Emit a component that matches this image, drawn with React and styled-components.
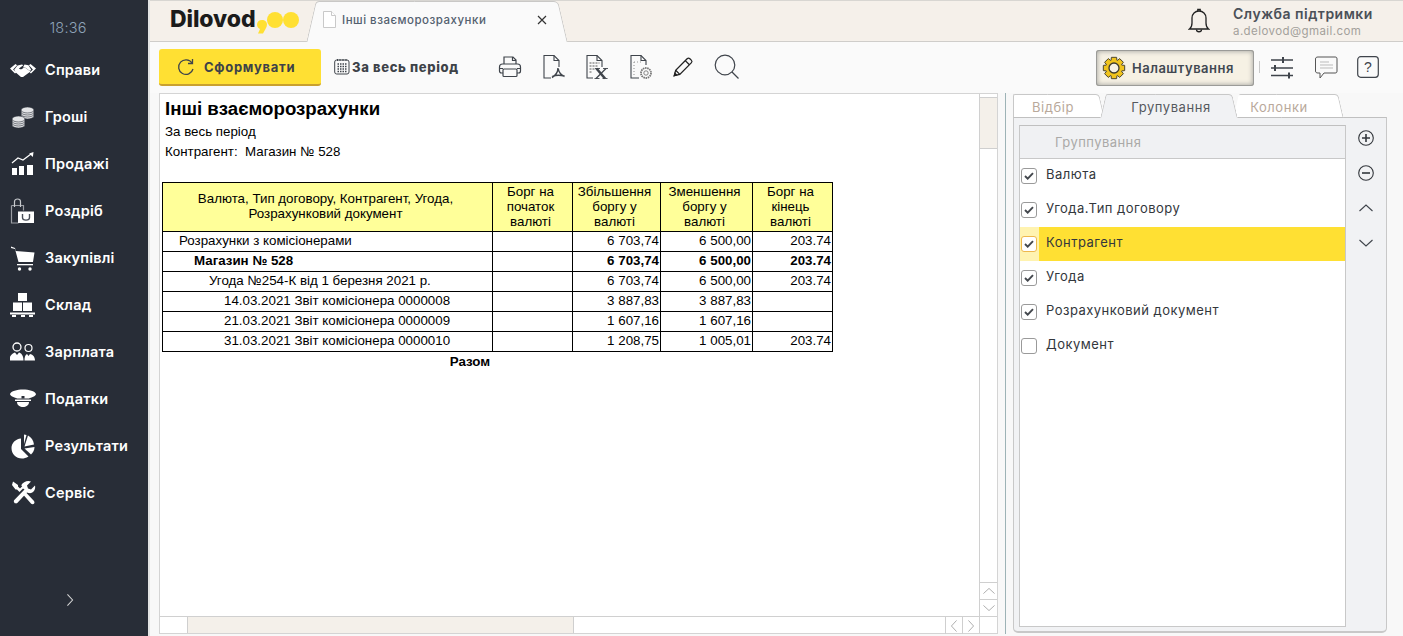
import React from "react";
import styled, { createGlobalStyle } from "styled-components";

const Global = createGlobalStyle`
  html, body, #root { margin: 0; padding: 0; width: 100%; height: 100%; overflow: hidden; }
  body { font-family: Inter, "Noto Sans", sans-serif; background: #f8f8f8; }
  * { box-sizing: border-box; }
`;

const Shell = styled.div`display: flex; width: 1403px; height: 636px;`;
const Sidebar = styled.nav`
  width: 150px; flex: none; background: #282d37; border-right: 2px solid #e4e4e4;
  display: flex; flex-direction: column; color: #fff;
`;
const Clock = styled.div`
  height: 46px; padding: 19px 12px 0 0; text-align: center; font-size: 14.5px; line-height: 18px; font-weight: 300; letter-spacing: 0.2px; color: #8fa3b8;
`;
const NavList = styled.div`display: flex; flex-direction: column; flex: 1;`;
const NavItem = styled.div`
  height: 47px; display: flex; align-items: center; flex: none; gap: 9px; padding-left: 10px;
  font-size: 14.5px; font-weight: 600; letter-spacing: 0.2px; color: #fff;
  svg { width: 26px; height: 26px; flex: none; }
`;
const Expand = styled.div`height: 72px; display: flex; justify-content: center; padding-right: 8px; align-items: flex-start; svg { margin-top: 30px; }`;

const Main = styled.div`flex: 1; min-width: 0; display: flex; flex-direction: column;`;
const TopBar = styled.header`
  height: 42px; flex: none; background: #f5f0ea; border-bottom: 1px solid #cfcdca; border-top: 1px solid #d8d6d2; display: flex; align-items: flex-end; position: relative;
`;
const Logo = styled.div`
  width: 157px; padding-left: 20px; height: 40px; display: flex; align-items: center; font-size: 23px; font-weight: 800; color: #1b1b1b; letter-spacing: -0.1px; padding-bottom: 4px;
  svg { flex: none; margin: 15px 0 0 2px; display: block; }
`;
const Dot = styled.i`width: 16px; height: 16px; border-radius: 50%; background: #ffe033; display: block; margin-top: 2px; flex: none;`;
const DocTab = styled.div`
  width: 260px; height: 41px; margin-bottom: -1px; position: relative; display: flex; align-items: center; padding: 0 20px 4px 16px; gap: 6px;
  font-size: 11.5px; font-weight: 500; color: #53606f; letter-spacing: 0.5px;
  &::before, &::after {
    content: ""; position: absolute; top: 0; bottom: 0; width: 55%; background: #fafafa; border-top: 1px solid #c9c8c6; z-index: 0;
  }
  &::before { left: 4px; transform: skewX(-13deg); border-left: 1px solid #c9c8c6; border-top-left-radius: 4px; }
  &::after { right: 4px; transform: skewX(13deg); border-right: 1px solid #c9c8c6; border-top-right-radius: 5px; }
  & > * { position: relative; z-index: 1; }
`;
const TabTitle = styled.span`flex: 1;`;
const TopRight = styled.div`margin-left: auto; height: 40px; display: flex; align-items: center; padding-right: 30px; gap: 23px;`;
const User = styled.div`display: flex; flex-direction: column; gap: 2px; width: 140px;`;
const UserName = styled.div`font-size: 14px; line-height: 17px; font-weight: 600; letter-spacing: 0.5px; color: #4b5058; white-space: nowrap;`;
const UserMail = styled.div`font-size: 11.5px; line-height: 14px; letter-spacing: 0.42px; color: #a3a09b; white-space: nowrap;`;

const Toolbar = styled.div`
  height: 51px; flex: none; background: #fafafa; display: flex; align-items: center; padding: 0 0 2px 9px;
`;
const Primary = styled.button`
  width: 162px; height: 37px; border: 0; border-bottom: 2px solid #c9a02f; border-radius: 3px; background: #ffe033; font: inherit; font-size: 13px; font-weight: 700; letter-spacing: 0.7px; color: #3d4248; display: flex; align-items: center; padding: 0 0 0 18px; gap: 10px; margin-top: 2px;
`;
const Period = styled.div`
  display: flex; align-items: center; gap: 2px; margin-left: 13px; font-size: 13px; font-weight: 800; letter-spacing: 0.65px; color: #3d4248; width: 134px; margin-right: 30px; white-space: nowrap;
`;
const Tools = styled.div`display: flex; align-items: center; gap: 19.5px; svg { flex: none; display: block; }`;
const Right = styled.div`margin-left: auto; display: flex; align-items: center; padding-right: 24px;`;
const Settings = styled.button`
  width: 158px; height: 36px; border: 0; border-radius: 3px; background: #f6f1e4; box-shadow: inset 0 0 0 1px #9b9b98, inset 0 0 4px 2px #b4b3ae; font: inherit; font-size: 13px; font-weight: 600; color: #414851; display: flex; align-items: center; padding: 0 0 0 6px; gap: 6px; margin: 3px 5px 0 0; letter-spacing: 0.5px;
`;
const Sep = styled.i`width: 1px; height: 12px; background: #c8c8c8; margin-right: 10px;`;
const RightIcons = styled.div`display: flex; align-items: center; gap: 19.5px; svg { display: block; flex: none; }`;

const Body = styled.div`flex: 1; min-height: 0; display: flex; padding: 0 16px 2px 9px;`;
const Report = styled.section`
  width: 839px; flex: none; border: 1px solid #d4d4d4; background: #fff; display: grid; grid-template-columns: 1fr 18px; grid-template-rows: 1fr 17px; margin-right: 7px; min-height: 0;
`;
const Sheet = styled.div`padding: 4px 0 0 2px; color: #000; font-family: "Liberation Sans", Arial, sans-serif; font-size: 13.33px; min-width: 0; min-height: 0; overflow: hidden;`;
const Title = styled.h1`margin: 0 0 0 3px; font-size: 18.67px; line-height: 21px; font-weight: 700;`;
const Line = styled.div`margin-left: 3px; height: 20px; line-height: 20px; white-space: pre; &:first-of-type { margin-top: 3px; }`;
const Table = styled.table`border-collapse: collapse; margin-top: 20px; table-layout: fixed; width: 671px; font-size: 13.33px; line-height: 15px;`;
const Th = styled.th`border: 1px solid #000; background: #ffff99; font-weight: 400; height: 49px; padding: ${p => p.$top ? "1px 4px 0 0" : "0 4px 2px 0"}; text-align: center; vertical-align: ${p => p.$top ? "top" : "middle"};`;
const Td = styled.td`
  border: 1px solid #000; height: 20px; padding: 0 1px 2px ${p => p.$indent || 1}px; white-space: nowrap; text-align: ${p => p.$num ? "right" : "left"}; font-weight: ${p => p.$b ? 700 : 400};
`;
const TotalCell = styled.td`height: 20px; text-align: center; font-weight: 700; padding-right: 56px;`;

const VScroll = styled.div`border-left: 1px solid #d0d0d0; display: flex; flex-direction: column; background: #fff;`;
const VTop = styled.div`height: 4px; border-bottom: 1px solid #cfcfcf;`;
const VThumb = styled.div`height: 51px; background: #f4f0ea; border-bottom: 1px solid #cfcfcf;`;
const Fill = styled.div`flex: 1;`;
const SBtn = styled.div`
  height: 17px; width: ${p => p.$w || "auto"}; border-top: ${p => p.$h ? 0 : "1px solid #cfcfcf"}; border-left: ${p => p.$h ? "1px solid #cfcfcf" : 0}; display: flex; align-items: center; justify-content: center; flex: none;
`;
const HScroll = styled.div`border-top: 1px solid #d0d0d0; display: flex; background: #fff; height: 17px;`;
const HStart = styled.div`width: 28px; flex: none; border-right: 1px solid #cfcfcf;`;
const HThumb = styled.div`width: 386px; flex: none; background: #f4f0ea; border-right: 1px solid #cfcfcf;`;
const Corner = styled.div`border-top: 1px solid #d0d0d0; border-left: 1px solid #d0d0d0;`;

const Splitter = styled.div`width: 1px; flex: none; background: #9db3b6; margin-right: 7px;`;

const Panel = styled.aside`flex: 1; min-width: 0; display: flex; flex-direction: column; padding: 1px 0 1px 0;`;
const Tabs = styled.div`display: flex; height: 24px; flex: none; position: relative; z-index: 1; margin-bottom: -1px;`;
const SideTab = styled.div`
  position: relative; height: 24px; width: ${p => p.$w}px; margin-left: ${p => p.$ml || 0}px; display: flex; align-items: center; justify-content: center; font-size: 13px; padding: 1px ${p => p.$pr || 0}px 0 ${p => p.$pl || 0}px; color: ${p => p.$active ? "#55595e" : "#b9a99b"}; letter-spacing: 0.55px; z-index: ${p => p.$active ? 2 : 1};
  & > span { position: relative; z-index: 1; }
  &::before, &::after {
    content: ""; position: absolute; top: 0; bottom: 0; width: 55%; border-top: 1px solid #c8c8c8; background: ${p => p.$active ? "#f1f2f4" : "#fff"};
    border-bottom: ${p => p.$active ? "1px solid #f1f2f4" : "1px solid #c0c0c0"};
  }
  &::before { left: ${p => p.$flat ? 0 : "3px"}; transform: ${p => p.$flat ? "none" : "skewX(-13deg)"}; border-left: 1px solid ${p => p.$noLeft ? "transparent" : "#c8c8c8"}; border-top-left-radius: 2px; }
  &::after { right: 3px; transform: skewX(13deg); border-right: 1px solid #c8c8c8; border-top-right-radius: 4px; }
`;
const PanelBody = styled.div`
  flex: 1; min-height: 0; border: 1px solid #c8c8c8; border-top: 1px solid #c0c0c0; border-radius: 0 0 5px 5px; background: #f1f2f4; display: flex; padding: 7px 0 4px 5px; border-bottom-width: 2px;
`;
const GroupList = styled.div`width: 327px; flex: none; border: 1px solid #c8c8c8; border-top-color: #c0c0c0; background: #fff; display: flex; flex-direction: column;`;
const GroupHead = styled.div`height: 33px; flex: none; background: #f0f1f3; border-bottom: 1px solid #c8c8c8; display: flex; align-items: center; padding: 0 0 0 35px; font-size: 13px; color: #aaa9a7; letter-spacing: 0.45px;`;
const Row = styled.div`
  height: 34px; flex: none; display: flex; align-items: center; padding-bottom: 4px; font-size: 13px; letter-spacing: 0.48px; color: #33373c;
  background: ${p => p.$selected ? "linear-gradient(90deg, #fff3b0 0 19px, #ffe033 19px)" : "transparent"};
`;
const Check = styled.span`
  width: 16px; height: 16px; margin: 3px 9px 0 1px; flex: none; border: 1px solid ${p => p.$selected ? "#eeb84c" : "#9a9a9a"}; border-radius: 3px; background: #fff; display: flex; align-items: center; justify-content: center;
`;
const Actions = styled.div`flex: 1; display: flex; flex-direction: column; align-items: center; margin-top: -5px; svg { display: block; }`;
const ActionBtn = styled.div`height: 35px; display: flex; align-items: center; justify-content: center; flex: none; width: 100%;`;

const ic = "#fff";
const HandshakeIcon = () => (
  <svg viewBox="0 0 26 26" fill={ic}>
    <path d="M0 11.5 5.5 7l1.6 1.2-4 4.3 3.2 3-1.3 1z"/>
    <path d="M26 11.5 20.5 7l-1.6 1.2 4 4.3-3.2 3 1.3 1z"/>
    <path d="M7.5 8.5 12 7.5l1.3.8-4.4 3.3c1 1.1 2.4.8 3.4.1l2.2-1.5 6 4.3-7.5 5.4h-2L5.5 15.2l-1.3-2.5z"/>
    <path d="M14.5 7.5 18.5 8.3l2.7 4.5-1.2 1.3-5.7-4.2-1.5.9z"/>
  </svg>
);
const CoinsIcon = () => (
  <svg viewBox="0 0 26 26" fill="#e4e5e7" stroke="#282d37" strokeWidth=".6">
    {[9, 7, 5, 3].map(y => <ellipse key={y} cx="17.5" cy={y + 3} rx="6.5" ry="3"/>)}
    {[18, 16, 14, 12].map(y => <ellipse key={y} cx="8.5" cy={y + 3} rx="6.5" ry="3"/>)}
  </svg>
);
const ChartIcon = () => (
  <svg viewBox="0 0 26 26" fill={ic}>
    <rect x="2" y="17" width="5" height="7"/><rect x="9" y="15" width="5" height="9"/><rect x="17" y="14" width="6" height="10"/>
    <path d="M2 12 8 7l5 2 8-6" fill="none" stroke={ic} strokeWidth="1.2"/><path d="M23.5 1l-.6 5-3.700-3.500z"/>
  </svg>
);
const BagIcon = () => (
  <svg viewBox="0 0 26 26" fill="none">
    <path d="M1.500 7.500h12v5M1.500 7.500V25h7" stroke="#9a9da3" strokeWidth="1.2"/>
    <path d="M4.500 9V3.500C4.500 2 6 1 7.500 1s3 1 3 2.500V9" stroke="#c7c9cd" strokeWidth="1.2"/>
    <path d="M8 13.500h16v11.500H8z" fill="#fff"/>
    <path d="M12.500 16v3.500c0 3.500 7 3.500 7 0V16" stroke="#4a4f59" strokeWidth="1.400"/>
  </svg>
);
const CartIcon = () => (
  <svg viewBox="0 0 26 26" fill={ic}>
    <path d="M1 1.500 5 3l.8 3 18.700 1.500L23 17H8.500L5 4 1 3z"/><path d="M7 19h16v1.300H7z"/><circle cx="9.500" cy="24" r="1.700"/><circle cx="20" cy="24" r="1.700"/>
  </svg>
);
const BoxesIcon = () => (
  <svg viewBox="0 0 26 26" fill={ic}>
    <rect x="8" y="1" width="9" height="8"/><rect x="3" y="10.500" width="9" height="8.500"/><rect x="13" y="10.500" width="9" height="8.500"/>
    <path d="M0 20.500h25v2H0zM2 23h4v2H2zM11 23h4v2h-4zM19 23h4v2h-4z"/>
  </svg>
);
const PeopleIcon = () => (
  <svg viewBox="0 0 26 26" fill="none">
    <circle cx="7" cy="8" r="4" stroke={ic} strokeWidth="1.300"/><circle cx="18.500" cy="9" r="3.500" stroke={ic} strokeWidth="1.200"/>
    <path d="M0 21.500v-3c0-2 3-4.500 5-5l2 2.500 2-2.500c2 .5 4.500 2.500 4.500 8z" fill={ic}/>
    <path d="M14.500 21.500c0-3 .5-5.500 2.500-6.500l1.500 2 1.500-2c2 .5 5 2 5 6.500z" fill={ic}/>
  </svg>
);
const CapIcon = () => (
  <svg viewBox="0 0 26 26" fill={ic}>
    <path d="M0 8C1 5 7 3.500 13 3.500S25 5 26 8c0 2.500-5 3.500-7 4.500H7C5 11.500 0 10.500 0 8z"/>
    <path d="M5 13.500h16v1.500H5z"/><path d="M7 16h12c0 3.500-3 5-6 5s-6-1.500-6-5z"/>
    <rect x="11.500" y="10" width="3" height="2.500" fill="#282d37"/>
  </svg>
);
const PieIcon = () => (
  <svg viewBox="0 0 26 26" fill={ic}>
    <path d="M11 5.500v10.500l7.500 7.500C16 25 14 25.500 12 25.500 6 25.500 1.500 21 1.500 15 1.500 10 5.500 6 11 5.500z"/>
    <path d="M14 1.500 16.500 2 14 11z"/><path d="M18 2.500C21 4 23.500 7 24 11.500l-9.500 2z"/>
    <path d="M14.500 15.500 24.500 14c0 3-1.500 6-3.500 7.500z"/>
  </svg>
);
const ToolsIcon = () => (
  <svg viewBox="0 0 26 26" fill={ic}>
    <path d="M3 1.500 8 5v1.500l2 2 2.200-2.200-1-1C13 1.500 18 0 21 1.500l-4 4 1 3 3 1 4-4c1 4-2 8.500-6.500 7.500l-1.500-.500-9.700 10.500c-2 1.500-4.500-1-3-3L14.500 9.500l-1.500-1-1.800 1.800L9.500 12 7 9.500H5.500L2 5z"/>
    <path d="M13.500 15 16 12.500l8 8.500c1.500 2.200-.8 4-2.800 2.800z"/>
  </svg>
);
const LogoComma = () => (
  <svg width="10" height="14" viewBox="0 0 10 14" fill="#ffe033"><path d="M5 0c3 0 5 2 5 4.500 0 1.500-.5 3-1.500 4.500L6 13.500H1L3 9C1.200 8.300 0 6.500 0 4.500 0 2 2 0 5 0z"/></svg>
);

const d = "#3f444b";
const Refresh = () => (
  <svg width="17" height="18" viewBox="0 0 17 18" fill="none" stroke={d} strokeWidth="1.300"><path d="M15 5A7.300 7.300 0 1 0 16 11"/><path d="M15.500 1v4.500H11" /></svg>
);
const Calendar = () => (
  <svg width="16" height="17" viewBox="0 0 16 17" fill="none" stroke={d}><rect x=".7" y="2" width="14.300" height="14" rx="2"/><path d="M3.500 1v2M6 1v2M9 1v2M12 1v2" /><path d="M3.500 6h9M3.500 8.500h9M3.500 11h9M3.500 13.500h9" strokeWidth="1.400" strokeDasharray="1.500 1"/></svg>
);
const Printer = () => (
  <svg width="24" height="24" viewBox="0 0 24 24" fill="none" stroke={d} strokeWidth="1.200"><path d="M6 9V2h9l3 3v4"/><path d="M14.500 2v3.500H18"/><path d="M5 18H3.500C2 18 1.500 17 1.500 16v-4c0-2 1-3 3-3h15c2 0 3 1 3 3v4c0 1-.5 2-2 2H19"/><rect x="5" y="14" width="14" height="7.500" rx="1"/><path d="M1.500 13.500H5M19 13.500h3.500"/></svg>
);
const Pdf = () => (
  <svg width="24" height="26" viewBox="0 0 24 26" fill="none" stroke={d} strokeWidth="1.100">
    <path d="M9 24H2V1.500h10l5 5V13"/><path d="M12 1.500v5h5"/>
    <path d="M16 14c0 3-2 7-6 9.500M16 14c.5 3 3 7 6.500 8.500M10.500 22.500c3-1.500 8-1.500 12-.5" strokeWidth="1.500"/>
  </svg>
);
const Xls = () => (
  <svg width="24" height="26" viewBox="0 0 24 26" fill="none" stroke={d} strokeWidth="1.100">
    <path d="M8 24H2V1.500h10l5 5V13"/><path d="M12 1.500v5h5"/><path d="M4.500 9h10M4.500 12h9M4.500 15h5M4.500 18h3" stroke="#aaa" strokeWidth="1.800" strokeDasharray="2 1"/>
    <path d="M11.500 14.500 20 24.500" strokeWidth="2.600"/><path d="M21 14.500 11 24.500" strokeWidth="1.200"/><path d="M10 14.500h5M18 14.500h5M9.500 24.500h5M17.500 24.500h5" strokeWidth=".9"/>
  </svg>
);
const DocGear = () => (
  <svg width="24" height="26" viewBox="0 0 24 26" fill="none" stroke={d} strokeWidth="1.100">
    <path d="M10 24H2V1.500h10l5 5V11"/><path d="M12 1.500v5h5"/><path d="M5 8h9M5 8v13" stroke="#999" strokeDasharray="1 2"/><circle cx="17" cy="19" r="5" strokeWidth="1.800" strokeDasharray="1.500 .7" stroke="#777"/><circle cx="17" cy="19" r="2.200" stroke="#777" strokeWidth=".9"/>
  </svg>
);
const Pencil = () => (
  <svg width="22" height="24" viewBox="0 0 24 24" fill="none" stroke="#222" strokeWidth="1.400"><path d="M2.500 21.500 4 15.500 16.500 3c1-1 2-1 3 0l1.500 1.500c1 1 1 2 0 3L8.500 20z"/><path d="M4 15.500l4.500 4.500M14.500 5l4.500 4.500M2.500 21.500l2.500-.8-1.700-1.800z" /></svg>
);
const Search = () => (
  <svg width="26" height="26" viewBox="0 0 26 26" fill="none" stroke={d} strokeWidth="1.200"><circle cx="11" cy="11" r="9.800"/><path d="M18 18l6.500 6.500"/></svg>
);
const Bell = () => (
  <svg width="22" height="26" viewBox="0 0 22 26" fill="none" stroke="#222" strokeWidth="1.300"><path d="M1.500 21c2-1.500 2.500-3 2.500-6V10c0-4 3-7 7-7s7 3 7 7v5c0 3 .5 4.500 2.500 6z"/><path d="M9.800 3V1.500h2.400V3M8.500 21.500c0 3 5 3 5 0"/></svg>
);
const gearPath = (() => {
  const pts = [];
  for (let i = 0; i < 8; i++) {
    const a = (i * Math.PI) / 4;
    [[-0.36, 8.3], [-0.24, 11], [0.24, 11], [0.36, 8.3]].forEach(([o, r]) => {
      pts.push(`${(12 + r * Math.cos(a + o)).toFixed(2)} ${(12 + r * Math.sin(a + o)).toFixed(2)}`);
    });
  }
  return `M${pts.join("L")}Z`;
})();
const Gear = () => (
  <svg width="24" height="24" viewBox="0 0 24 24"><path d={gearPath} fill="#f0c31c" stroke="#4a4530" strokeWidth="1"/><circle cx="12" cy="12" r="5" fill="#f6f1e4" stroke="#3d3a2c" strokeWidth="1.300"/></svg>
);
const Sliders = () => (
  <svg width="24" height="24" viewBox="0 0 24 24" fill="none" stroke={d} strokeWidth="1.400"><path d="M1 5h22M1 13h22M1 20.500h22"/><path d="M13 2v6M5 10v6M19 17.500v6" strokeWidth="2"/></svg>
);
const Chat = () => (
  <svg width="24" height="24" viewBox="0 0 24 24" fill="none" stroke="#555" strokeWidth="1"><path d="M4 2h17c1.500 0 2 .5 2 2v12c0 1.500-.5 2-2 2H10l-4 5v-5H4c-1.500 0-2.500-.5-2.500-2V4C1.500 2.500 2.500 2 4 2z"/><path d="M6 7h9M6 10h13M6 13h13" stroke="#bbb"/></svg>
);
const Help = () => (
  <svg width="22" height="22" viewBox="0 0 22 22" fill="none" stroke={d} strokeWidth="1.200"><rect x=".7" y=".7" width="20.600" height="20.600" rx="3"/><text x="7" y="16" fontFamily="Liberation Sans" fontSize="14" fill={d} stroke="none">?</text></svg>
);
const Tick = () => <svg width="10" height="8" viewBox="0 0 10 8" fill="none" stroke="#44484e" strokeWidth="1.900"><path d="M1 4l2.700 2.700L9 1.200"/></svg>;
const Plus = () => <svg width="16" height="16" viewBox="0 0 16 16" fill="none" stroke="#33373c" strokeWidth="1.100"><circle cx="8" cy="8" r="7.300"/><path d="M4 8h8M8 4v8" strokeWidth="1.600"/></svg>;
const Minus = () => <svg width="16" height="16" viewBox="0 0 16 16" fill="none" stroke="#33373c" strokeWidth="1.100"><circle cx="8" cy="8" r="7.300"/><path d="M4 8h8" strokeWidth="1.600"/></svg>;
const Chev = ({ r = 0, s = 14, c = "#3f444b", w = 1.1 }) => (
  <svg width={s} height={s} viewBox="0 0 14 14" fill="none" stroke={c} strokeWidth={w} style={r ? { transform: `rotate(${r}deg)` } : undefined}><path d="M.5 10 7 4l6.500 6"/></svg>
);
const Close = () => <svg width="10" height="10" viewBox="0 0 10 10" stroke="#333" strokeWidth="1.200"><path d="M1 1l8 8M9 1L1 9"/></svg>;
const Paper = () => <svg width="13" height="17" viewBox="0 0 13 17" fill="#fff" stroke="#c9c9c9"><path d="M.5.500h8l4 4v12H.500z"/><path d="M8.500.500v4h4"/></svg>;

const nav = [
  ["Справи", HandshakeIcon], ["Гроші", CoinsIcon], ["Продажі", ChartIcon], ["Роздріб", BagIcon], ["Закупівлі", CartIcon],
  ["Склад", BoxesIcon], ["Зарплата", PeopleIcon], ["Податки", CapIcon], ["Результати", PieIcon], ["Сервіс", ToolsIcon],
];
const rows = [
  { n: "Розрахунки з комісіонерами", i: 16, a: "6 703,74", b: "6 500,00", c: "203.74" },
  { n: "Магазин № 528", i: 31, a: "6 703,74", b: "6 500,00", c: "203.74", bold: true },
  { n: "Угода №254-К від 1 березня 2021 р.", i: 46, a: "6 703,74", b: "6 500,00", c: "203.74" },
  { n: "14.03.2021 Звіт комісіонера 0000008", i: 61, a: "3 887,83", b: "3 887,83", c: "" },
  { n: "21.03.2021 Звіт комісіонера 0000009", i: 61, a: "1 607,16", b: "1 607,16", c: "" },
  { n: "31.03.2021 Звіт комісіонера 0000010", i: 61, a: "1 208,75", b: "1 005,01", c: "203.74" },
];
const groups = [
  ["Валюта", true], ["Угода.Тип договору", true], ["Контрагент", true, true], ["Угода", true], ["Розрахунковий документ", true], ["Документ", false],
];

export default function App() {
  return (
    <Shell>
      <Global />
      <Sidebar>
        <Clock>18:36</Clock>
        <NavList>
          {nav.map(([label, Icon]) => <NavItem key={label}><Icon />{label}</NavItem>)}
        </NavList>
        <Expand><Chev r={90} s={12} c="#d5d5d5" w={1.200} /></Expand>
      </Sidebar>
      <Main>
        <TopBar>
          <Logo>Dilovod<LogoComma /><Dot /><Dot /></Logo>
          <DocTab><Paper /><TabTitle>Інші взаєморозрахунки</TabTitle><Close /></DocTab>
          <TopRight>
            <Bell />
            <User><UserName>Служба підтримки</UserName><UserMail>a.delovod@gmail.com</UserMail></User>
          </TopRight>
        </TopBar>
        <Toolbar>
          <Primary><Refresh />Сформувати</Primary>
          <Period><Calendar />За весь період</Period>
          <Tools><Printer /><Pdf /><Xls /><DocGear /><Pencil /><Search /></Tools>
          <Right>
            <Settings><Gear />Налаштування</Settings>
            <Sep />
            <RightIcons><Sliders /><Chat /><Help /></RightIcons>
          </Right>
        </Toolbar>
        <Body>
          <Report>
            <Sheet>
              <Title>Інші взаєморозрахунки</Title>
              <Line>За весь період</Line>
              <Line>Контрагент:  Магазин № 528</Line>
              <Table>
                <colgroup><col width="330"/><col width="80"/><col width="88"/><col width="92"/><col width="80"/></colgroup>
                <thead>
                  <tr>
                    <Th>Валюта, Тип договору, Контрагент, Угода,<br/>Розрахунковий документ</Th>
                    <Th $top>Борг на<br/>початок<br/>валюті</Th>
                    <Th $top>Збільшення<br/>боргу у<br/>валюті</Th>
                    <Th $top>Зменшення<br/>боргу у<br/>валюті</Th>
                    <Th $top>Борг на<br/>кінець<br/>валюті</Th>
                  </tr>
                </thead>
                <tbody>
                  {rows.map(r => (
                    <tr key={r.n}>
                      <Td $indent={r.i} $b={r.bold}>{r.n}</Td>
                      <Td />
                      <Td $num $b={r.bold}>{r.a}</Td>
                      <Td $num $b={r.bold}>{r.b}</Td>
                      <Td $num $b={r.bold}>{r.c}</Td>
                    </tr>
                  ))}
                  <tr><TotalCell colSpan={5}>Разом</TotalCell></tr>
                </tbody>
              </Table>
            </Sheet>
            <VScroll>
              <VTop /><VThumb /><Fill />
              <SBtn><Chev c="#aaa" s={12} /></SBtn>
              <SBtn><Chev c="#aaa" s={12} r={180} /></SBtn>
            </VScroll>
            <HScroll>
              <HStart /><HThumb /><Fill />
              <SBtn $h $w="17px"><Chev c="#aaa" s={12} r={-90} /></SBtn>
              <SBtn $h $w="17px"><Chev c="#aaa" s={12} r={90} /></SBtn>
            </HScroll>
            <Corner />
          </Report>
          <Splitter />
          <Panel>
            <Tabs>
              <SideTab $w={92} $flat $pr={12}><span>Відбір</span></SideTab>
              <SideTab $w={138} $ml={-5} $active $pl={4}><span>Групування</span></SideTab>
              <SideTab $w={110} $ml={-5} $noLeft $pr={18}><span>Колонки</span></SideTab>
            </Tabs>
            <PanelBody>
              <GroupList>
                <GroupHead>Группування</GroupHead>
                {groups.map(([t, c, s]) => (
                  <Row key={t} $selected={s}>
                    <Check $selected={s}>{c && <Tick />}</Check>{t}
                  </Row>
                ))}
              </GroupList>
              <Actions>
                <ActionBtn><Plus /></ActionBtn>
                <ActionBtn><Minus /></ActionBtn>
                <ActionBtn><Chev /></ActionBtn>
                <ActionBtn><Chev r={180} /></ActionBtn>
              </Actions>
            </PanelBody>
          </Panel>
        </Body>
      </Main>
    </Shell>
  );
}
